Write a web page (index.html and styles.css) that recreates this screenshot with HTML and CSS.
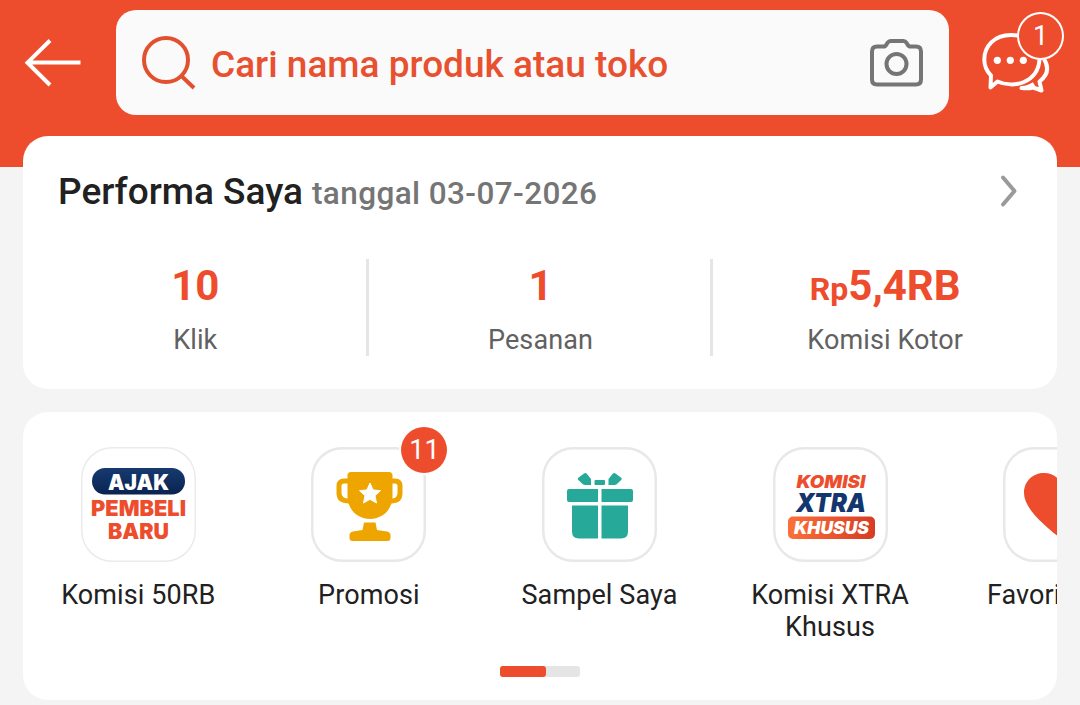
FILE: index.html
```html
<!DOCTYPE html>
<html lang="id">
<head>
  <meta charset="UTF-8">
  <meta name="viewport" content="width=device-width, initial-scale=1.0">
  <title>Performa Saya</title>
  <link rel="stylesheet" href="styles.css">
</head>
<body>

<header class="header">
  <svg class="back" width="60" height="50" viewBox="0 0 60 50">
    <path d="M28 2.500L5.500 24.700L28 47M4.500 24.500H58.500"/>
  </svg>
  <div class="search">
    <svg class="search-icon" width="56" height="56" viewBox="0 0 56 56">
      <circle cx="25" cy="25" r="22"/>
      <path d="M40.500 41L53 53"/>
    </svg>
    <span class="search-text">Cari nama produk atau toko</span>
    <svg class="camera" width="54" height="48" viewBox="0 0 54 48">
      <path d="M7 7.500H13.500Q15.500 7.500 16.500 5.500L17.500 3.800Q18.700 2 20.500 2H33.500Q35.300 2 36.500 3.800L37.500 5.500Q38.500 7.500 40.500 7.500H46Q51 7.500 51 12.500V40.500Q51 45.500 46 45.500H7Q2 45.500 2 40.500V12.500Q2 7.500 7 7.500Z"/>
      <circle cx="26.500" cy="25" r="10"/>
    </svg>
  </div>
  <div class="chat">
    <svg width="70" height="62" viewBox="0 0 70 62">
      <path d="M30 3C13 3 3.300 14.500 3.300 27.500C3.300 34 5.500 39 10 43.500L9.500 55.500L16.500 49.500C24 53 35 53.500 43 50C52 46 58 38 58.500 27C58 12 46 3 30 3Z"/>
      <path d="M63 27C68.500 36 66.500 43.500 58.500 49.500L60.500 58.500L52 55.500C48.500 56.500 44.500 56.500 40.500 56C46 56 50 54 53 52"/>
      <circle class="dot" cx="16.300" cy="28.300" r="3.600"/>
      <circle class="dot" cx="29.300" cy="28.300" r="3.600"/>
      <circle class="dot" cx="42.300" cy="28.300" r="3.600"/>
    </svg>
    <span class="badge badge-chat">1</span>
  </div>
</header>

<main class="content">
  <section class="card performance">
    <div class="title-row">
      <h1 class="title">Performa Saya</h1>
      <span class="date">tanggal 03-07-2026</span>
      <svg class="chevron" width="20" height="34" viewBox="0 0 20 34">
        <path d="M4 3.500L15.500 17L4 30.500"/>
      </svg>
    </div>
    <div class="stats">
      <div class="stat">
        <div class="value">10</div>
        <div class="label">Klik</div>
      </div>
      <div class="stat">
        <div class="value">1</div>
        <div class="label">Pesanan</div>
      </div>
      <div class="stat">
        <div class="value"><small>Rp</small>5,4RB</div>
        <div class="label">Komisi Kotor</div>
      </div>
    </div>
  </section>

  <section class="card menu">
    <div class="items">
      <div class="item">
        <div class="tile tile-thin">
          <svg width="115" height="115" viewBox="0 0 115 115">
            <defs>
              <linearGradient id="navy" x1="0" y1="0" x2="0" y2="1">
                <stop offset="0" stop-color="#163a70"/>
                <stop offset="1" stop-color="#0a2350"/>
              </linearGradient>
            </defs>
            <rect x="11" y="21" width="93" height="26.500" rx="13" fill="url(#navy)"/>
            <g class="logo">
              <text x="27" y="42.500" font-size="22" textLength="61" lengthAdjust="spacingAndGlyphs" fill="#fff">AJAK</text>
              <text x="10" y="69" font-size="22" textLength="95" lengthAdjust="spacingAndGlyphs" fill="#ee4d2d">PEMBELI</text>
              <text x="27" y="91.700" font-size="21.500" textLength="61" lengthAdjust="spacingAndGlyphs" fill="#ee4d2d">BARU</text>
            </g>
          </svg>
        </div>
        <div class="name">Komisi 50RB</div>
      </div>
      <div class="item">
        <div class="tile">
          <svg width="115" height="115" viewBox="0 0 115 115">
            <g fill="#eea500">
              <path d="M40 25H78Q81.500 25 81.500 28.500V49C81.500 63 71 72 59 72S36.500 63 36.500 49V28.500Q36.500 25 40 25Z"/>
              <path d="M53 75.500H64.500L66 83L76 84.500Q79.500 85.500 79.500 88V91Q79.500 94 76.500 94H41.500Q38.500 94 38.500 91V88Q38.500 85.500 42 84.500L51.500 83Z"/>
            </g>
            <path d="M37 34H33Q28 34 28 39V46C28 52 32 54 38 54M81 34H84Q89 34 89 39V46C89 52 85 54 80 54" fill="none" stroke="#eea500" stroke-width="5"/>
            <path d="M59 36L62.100 42.900L69.500 43.700L64 48.700L65.500 56L59 52.300L52.500 56L54 48.700L48.500 43.700L55.900 42.900Z" fill="#fff" stroke="#fff" stroke-linejoin="round"/>
          </svg>
          <span class="badge badge-tile">11</span>
        </div>
        <div class="name">Promosi</div>
      </div>
      <div class="item">
        <div class="tile">
          <svg width="115" height="115" viewBox="0 0 115 115" fill="#27a999">
            <path d="M36 31L42 26.500Q43.500 25.500 45 27L49 32V38H43Q41 38 39.500 36L35.800 32.500Z"/>
            <path d="M79.500 31L73.500 26.500Q72 25.500 70.500 27L66.500 32V38H72.500Q74.500 38 76 36L79.700 32.500Z"/>
            <rect x="52.500" y="33" width="10.500" height="5" rx="1"/>
            <path d="M27 42H56V55H27Q25 55 25 53V44Q25 42 27 42ZM59.500 42H89Q91 42 91 44V53Q91 55 89 55H59.500Z"/>
            <path d="M30 58.500H56V91.500H37Q30 91.500 30 84.500ZM59.500 58.500H86V84.500Q86 91.500 79 91.500H59.500Z"/>
          </svg>
        </div>
        <div class="name">Sampel Saya</div>
      </div>
      <div class="item">
        <div class="tile">
          <svg width="115" height="115" viewBox="0 0 115 115">
            <defs>
              <linearGradient id="flame">
                <stop offset="0" stop-color="#fb7038"/>
                <stop offset="1" stop-color="#d63c24"/>
              </linearGradient>
            </defs>
            <rect x="15" y="69.500" width="87" height="22.500" rx="5" fill="url(#flame)"/>
            <g class="logo logo-italic">
              <text x="23.500" y="41" font-size="17.500" textLength="69" lengthAdjust="spacingAndGlyphs" fill="#ee4d2d">KOMISI</text>
              <text x="23" y="65" font-size="25.500" textLength="70" lengthAdjust="spacingAndGlyphs" fill="#12366d">XTRA</text>
              <text x="21" y="87.300" font-size="17.500" textLength="75" lengthAdjust="spacingAndGlyphs" fill="#fff">KHUSUS</text>
            </g>
          </svg>
        </div>
        <div class="name">Komisi XTRA Khusus</div>
      </div>
      <div class="item">
        <div class="tile">
          <svg width="115" height="115" viewBox="0 0 115 115">
            <path d="M58 92C48 83 21 64 21 46C21 34 30 26 41 26C49 26 55 30 58 36C61 30 67 26 75 26C86 26 95 34 95 46C95 64 68 83 58 92Z" fill="#ee4d2d"/>
          </svg>
        </div>
        <div class="name">Favorit Saya</div>
      </div>
    </div>
    <div class="scrollbar"><div class="thumb"></div></div>
  </section>
</main>

</body>
</html>
```
FILE: styles.css
```css
* {
  box-sizing: border-box;
}
body {
  margin: 0;
  height: 705px;
  overflow: hidden;
  font-family: Roboto, "Liberation Sans", sans-serif;
  color: #212121;
  background: #f4f4f4;
}
svg {
  display: block;
  flex-shrink: 0;
}
.header {
  display: flex;
  align-items: flex-start;
  height: 167px;
  padding: 10px 16px 0 22px;
  background: #ee4d2d;
}
.back {
  margin: 28px 34px 0 0;
  fill: none;
  stroke: #fff;
  stroke-width: 4;
}
.search {
  display: flex;
  align-items: center;
  width: 833px;
  height: 105px;
  padding: 0 25px;
  border-radius: 20px;
  background: #fafafa;
}
.search-icon {
  fill: none;
  stroke: #e2512f;
  stroke-width: 4;
}
.search-text {
  flex: 1;
  margin-left: 14px;
  padding-top: 4px;
  font-size: 37px;
  font-weight: 500;
  color: #e8502f;
}
.camera {
  fill: none;
  stroke: #757575;
  stroke-width: 4;
}
.chat {
  position: relative;
  margin: 22px 0 0 32px;
}
.chat svg {
  fill: none;
  stroke: #fff;
  stroke-width: 4;
  stroke-linejoin: round;
}
.chat .dot {
  fill: #fff;
  stroke: none;
}
.badge {
  position: absolute;
  display: flex;
  align-items: center;
  justify-content: center;
  width: 46px;
  height: 46px;
  border-radius: 50%;
  font-size: 27px;
  color: #fff;
  background: #ee4d2d;
}
.badge-chat {
  top: -20px;
  left: 36px;
  width: 47px;
  height: 48px;
  border: 2px solid #fff;
}
.badge-tile {
  top: -20px;
  left: 90px;
  box-shadow: 0 0 0 2px #fff;
}
.content {
  display: flex;
  flex-direction: column;
  gap: 23px;
  margin-top: -31px;
  padding: 0 23px;
}
.card {
  border-radius: 25px;
  background: #fff;
}
.performance {
  height: 253px;
}
.title-row {
  display: flex;
  align-items: baseline;
  height: 123px;
  padding: 34px 38px 0 35px;
}
.title {
  margin: 0 9px 0 0;
  font-size: 37px;
  font-weight: 500;
}
.date {
  font-size: 31.5px;
  font-weight: 500;
  letter-spacing: 0.4px;
  color: #757575;
}
.chevron {
  align-self: flex-start;
  margin: 4px 0 0 auto;
  fill: none;
  stroke: #9a9a9a;
  stroke-width: 4;
  stroke-linecap: round;
  stroke-linejoin: round;
}
.stats {
  display: grid;
  grid-template-columns: repeat(3, 1fr);
  height: 97px;
}
.stat {
  text-align: center;
}
.stat + .stat {
  margin-left: -2px;
  border-left: 3px solid #e5e5e5;
}
.value {
  height: 51px;
  padding-top: 3px;
  font-size: 42px;
  font-weight: 700;
  line-height: 48px;
  color: #ee4d2d;
}
.value small {
  font-size: 32px;
}
.label {
  padding-top: 14px;
  font-size: 27px;
  line-height: 32px;
  letter-spacing: 0.1px;
  color: #616161;
}
.menu {
  height: 288px;
  overflow: hidden;
}
.items {
  display: flex;
  height: 254px;
  padding-top: 35px;
}
.item {
  display: flex;
  flex-direction: column;
  align-items: center;
  flex: 0 0 230.6px;
}
.tile {
  position: relative;
  width: 115px;
  height: 115px;
  border-radius: 31px;
  box-shadow: inset 0 0 0 2.5px #e8e8e8;
}
.tile-thin {
  box-shadow: inset 0 0 0 1.5px #ebebeb;
}
.logo {
  font-family: Inter, sans-serif;
  font-weight: 900;
}
.logo-italic {
  font-style: italic;
}
.name {
  width: 180px;
  margin-top: 17px;
  font-size: 27px;
  line-height: 32px;
  letter-spacing: 0.1px;
  text-align: center;
}
.scrollbar {
  width: 80px;
  height: 11px;
  margin: 0 auto;
  border-radius: 3px;
  background: #e5e5e5;
}
.thumb {
  width: 46px;
  height: 11px;
  border-radius: 3px;
  background: #ee4d2d;
}
```
